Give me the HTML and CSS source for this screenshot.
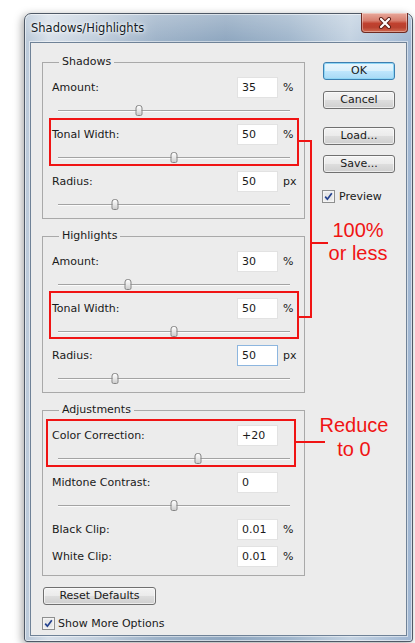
FILE: index.html
```html
<!DOCTYPE html>
<html lang="en">
<head>
<meta charset="utf-8">
<title>Shadows/Highlights</title>
<link rel="stylesheet" href="styles.css">
</head>
<body>
<div class="window">
  <div class="titlebar">
    <span class="title">Shadows/Highlights</span>
    <div class="close">
      <svg width="14" height="12" viewBox="0 0 14 12">
        <path d="M3 2 L11 10 M11 2 L3 10" stroke="#5a1c14" stroke-width="4" stroke-linecap="round"/>
        <path d="M3 2 L11 10 M11 2 L3 10" stroke="#ffffff" stroke-width="2.2" stroke-linecap="round"/>
      </svg>
    </div>
  </div>
  <div class="client">
    <div class="left">
      <section class="group">
        <div class="group-title">Shadows</div>
        <div class="ctl">
          <div class="row"><span class="lbl">Amount:</span><span class="field">35</span><span class="unit">%</span></div>
          <div class="slider"><span class="thumb" style="left:35%"></span></div>
        </div>
        <div class="ctl">
          <div class="row"><span class="lbl">Tonal Width:</span><span class="field">50</span><span class="unit">%</span></div>
          <div class="slider"><span class="thumb" style="left:50%"></span></div>
        </div>
        <div class="ctl">
          <div class="row"><span class="lbl">Radius:</span><span class="field">50</span><span class="unit">px</span></div>
          <div class="slider"><span class="thumb" style="left:24.7%"></span></div>
        </div>
      </section>

      <section class="group">
        <div class="group-title">Highlights</div>
        <div class="ctl">
          <div class="row"><span class="lbl">Amount:</span><span class="field">30</span><span class="unit">%</span></div>
          <div class="slider"><span class="thumb" style="left:30%"></span></div>
        </div>
        <div class="ctl">
          <div class="row"><span class="lbl">Tonal Width:</span><span class="field">50</span><span class="unit">%</span></div>
          <div class="slider"><span class="thumb" style="left:50%"></span></div>
        </div>
        <div class="ctl">
          <div class="row"><span class="lbl">Radius:</span><span class="field focus">50</span><span class="unit">px</span></div>
          <div class="slider"><span class="thumb" style="left:24.7%"></span></div>
        </div>
      </section>

      <section class="group group-adjust">
        <div class="group-title">Adjustments</div>
        <div class="ctl">
          <div class="row"><span class="lbl">Color Correction:</span><span class="field">+20</span><span class="unit"></span></div>
          <div class="slider"><span class="thumb" style="left:60.5%"></span></div>
        </div>
        <div class="ctl">
          <div class="row"><span class="lbl">Midtone Contrast:</span><span class="field">0</span><span class="unit"></span></div>
          <div class="slider"><span class="thumb" style="left:50%"></span></div>
        </div>
        <div class="row"><span class="lbl">Black Clip:</span><span class="field">0.01</span><span class="unit">%</span></div>
        <div class="row clip-gap"><span class="lbl">White Clip:</span><span class="field">0.01</span><span class="unit">%</span></div>
      </section>

      <button class="btn btn-reset" type="button">Reset Defaults</button>
      <label class="check check-more">
        <svg class="box" width="13" height="13" viewBox="0 0 13 13">
          <rect x="0.5" y="0.5" width="12" height="12" fill="#f4f4f4" stroke="#8e8f8f"/>
          <rect x="2.5" y="2.5" width="8" height="8" fill="#e6e6e6"/>
          <path d="M3.2 6.6 L5.4 9.2 L9.8 3.2" fill="none" stroke="#24428f" stroke-width="1.7"/>
        </svg>
        <span>Show More Options</span>
      </label>
    </div>

    <div class="right">
      <button class="btn btn-ok" type="button">OK</button>
      <button class="btn btn-cancel" type="button">Cancel</button>
      <button class="btn btn-load" type="button">Load...</button>
      <button class="btn btn-save" type="button">Save...</button>
      <label class="check check-preview">
        <svg class="box" width="13" height="13" viewBox="0 0 13 13">
          <rect x="0.5" y="0.5" width="12" height="12" fill="#f4f4f4" stroke="#8e8f8f"/>
          <rect x="2.5" y="2.5" width="8" height="8" fill="#e6e6e6"/>
          <path d="M3.2 6.6 L5.4 9.2 L9.8 3.2" fill="none" stroke="#24428f" stroke-width="1.7"/>
        </svg>
        <span>Preview</span>
      </label>
    </div>
  </div>
</div>

<!-- red callouts drawn over the dialog -->
<div class="mark mark-shadow-tonal"></div>
<div class="mark mark-high-tonal"></div>
<div class="mark mark-color"></div>
<div class="bracket"></div>
<div class="bracket-arm"></div>
<div class="note note-tonal">100%<br>or less</div>
<div class="color-arm"></div>
<div class="note note-color">Reduce<br>to 0</div>
</body>
</html>
```

FILE: styles.css
```css
html, body {
  margin: 0;
  padding: 0;
}

body {
  position: relative;
  width: 415px;
  height: 643px;
  overflow: hidden;
  background: #ffffff;
  font-family: "DejaVu Sans", "Liberation Sans", sans-serif;
  font-size: 11px;
  color: #1a1a1a;
}

/* ---------- window frame ---------- */
.window {
  display: flex;
  flex-direction: column;
  box-sizing: border-box;
  width: 389px;
  height: 629px;
  margin: 13px 0 0 24px;
  padding: 0 5px 5px;
  border: 1px solid #4f5966;
  border-radius: 7px 7px 3px 3px;
  background:
    linear-gradient(180deg, rgba(255,255,255,0.25) 0, rgba(255,255,255,0) 28px),
    linear-gradient(90deg, #b9c8d8 0%, #d6dfe9 6%, #c2cfdd 18%, #9db2c8 34%, #8ea6bf 52%, #9fb5cb 68%, #c3d2e1 84%, #9fb6d2 100%);
  box-shadow: 0 0 0 1px rgba(255,255,255,0.55) inset, -2px 2px 8px rgba(0,0,0,0.35);
}

.titlebar {
  display: flex;
  align-items: flex-start;
  flex: none;
  height: 28px;
}

.title {
  margin: 7px 0 0 1px;
  font-size: 11.5px;
  color: #141c26;
  text-shadow: 0 0 6px #ffffff, 0 0 3px #ffffff;
}

.close {
  display: flex;
  align-items: center;
  justify-content: center;
  box-sizing: border-box;
  width: 47px;
  height: 20px;
  margin: -1px -1px 0 auto;
  border: 1px solid #6e2a22;
  border-top: none;
  border-radius: 0 0 4px 4px;
  background: linear-gradient(180deg, #e8a99c 0%, #d77e6e 40%, #c0412f 55%, #b9402e 75%, #d06a52 100%);
  box-shadow: inset 0 0 0 1px rgba(255,255,255,0.35);
}

/* ---------- client area ---------- */
.client {
  display: flex;
  flex: 1;
  box-sizing: border-box;
  padding: 19px 0 0 11px;
  border: 1px solid #6f8297;
  background: #ececec;
  box-shadow: 0 0 0 1px rgba(255,255,255,0.5);
}

.left {
  width: 263px;
}

.right {
  display: flex;
  flex-direction: column;
  width: 72px;
  margin-left: 18px;
}

/* ---------- group boxes ---------- */
.group {
  box-sizing: border-box;
  width: 263px;
  margin-bottom: 17px;
  padding: 0 4px 0 6px;
  border: 1px solid #a9a9a9;
}

.group-title {
  width: max-content;
  margin: -8px 0 8px 10px;
  padding: 0 3px;
  line-height: 14px;
  background: #ececec;
}

.group-adjust {
  padding-bottom: 8px;
  margin-bottom: 11px;
}

.row {
  display: flex;
  align-items: center;
  height: 21px;
}

.clip-gap {
  margin-top: 6px;
}

.lbl {
  flex: 1;
  padding-left: 3px;
}

.field {
  box-sizing: border-box;
  width: 41px;
  height: 21px;
  padding: 0 0 0 4px;
  line-height: 19px;
  border: 1px solid #e2e2e2;
  background: #ffffff;
}

.field.focus {
  border-color: #8db6df;
}

.unit {
  width: 17px;
  margin-left: 5px;
}

/* ---------- sliders ---------- */
.slider {
  position: relative;
  height: 26px;
  margin: 0 10px 0 9px;
}

.slider::before {
  content: "";
  position: absolute;
  left: 0;
  right: 0;
  top: 12px;
  height: 1px;
  background: #a3a3a3;
  box-shadow: 0 1px 0 #fbfbfb;
}

.thumb {
  position: absolute;
  top: 7px;
  box-sizing: border-box;
  width: 7px;
  height: 11px;
  transform: translateX(-50%);
  border: 1px solid #858585;
  border-radius: 3px 3px 2px 2px;
  background: linear-gradient(180deg, #fdfdfd 0%, #e8e8e8 50%, #cdcdcd 100%);
}

/* ---------- buttons ---------- */
.btn {
  box-sizing: border-box;
  height: 18px;
  padding: 0;
  font: inherit;
  color: #1a1a1a;
  line-height: 16px;
  border: 1px solid #707070;
  border-radius: 3px;
  background: linear-gradient(180deg, #f3f3f3 0%, #ebebeb 48%, #dddddd 52%, #cfcfcf 100%);
  box-shadow: inset 0 0 0 1px rgba(255,255,255,0.6);
}

.right .btn {
  width: 72px;
}

.btn-ok {
  border-color: #3c7fb1;
  background: linear-gradient(180deg, #eaf6fd 0%, #d9f0fc 48%, #bee6fd 52%, #a7d9f5 100%);
  box-shadow: inset 0 0 0 1px #8fd6f5;
}

.btn-cancel {
  margin-top: 11px;
}

.btn-load {
  margin-top: 18px;
}

.btn-save {
  margin-top: 10px;
}

.btn-reset {
  width: 113px;
  margin-left: 1px;
}

.check {
  display: flex;
  align-items: center;
  gap: 4px;
}

.check .box {
  flex: none;
}

.check-preview {
  margin: 17px 0 0 -1px;
}

.check-more {
  margin-top: 12px;
  gap: 3px;
}

/* ---------- red callouts ---------- */
.mark {
  position: absolute;
  box-sizing: border-box;
  width: 250px;
  height: 48px;
  border: 2px solid #f01414;
}

.mark-shadow-tonal {
  left: 49px;
  top: 118px;
}

.mark-high-tonal {
  left: 49px;
  top: 291px;
}

.mark-color {
  left: 46px;
  top: 419px;
}

.bracket {
  position: absolute;
  box-sizing: border-box;
  left: 299px;
  top: 140px;
  width: 13px;
  height: 178px;
  border: 2px solid #f01414;
  border-left: none;
}

.bracket-arm {
  position: absolute;
  left: 311px;
  top: 242px;
  width: 17px;
  height: 2px;
  background: #f01414;
}

.color-arm {
  position: absolute;
  left: 296px;
  top: 441px;
  width: 29px;
  height: 2px;
  background: #f01414;
}

.note {
  position: absolute;
  width: 80px;
  font-family: "Liberation Sans", Arial, sans-serif;
  font-size: 20px;
  text-align: center;
  color: #f01414;
}

.note-tonal {
  left: 318px;
  top: 219px;
  line-height: 23px;
}

.note-color {
  left: 314px;
  top: 413px;
  line-height: 24px;
}
```
